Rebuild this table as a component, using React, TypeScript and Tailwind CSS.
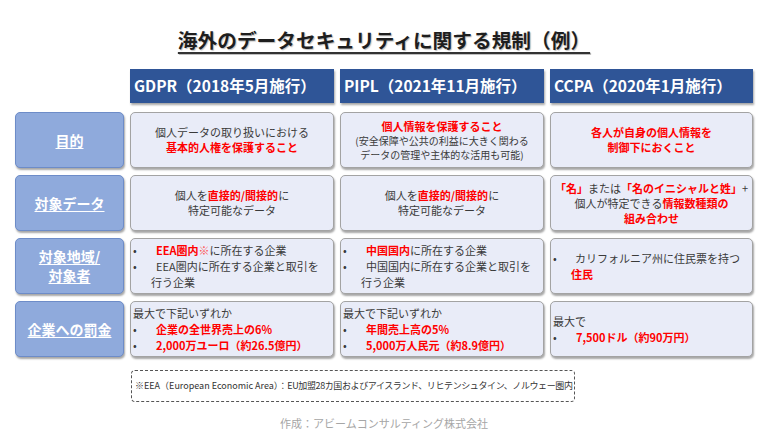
import type { ReactNode } from 'react'

const FONT = { fontFamily: '"Noto Sans CJK JP", "Noto Sans", sans-serif' }

function Red({ children }: { children: ReactNode }) {
  return <span className="font-bold text-[#ff0000]">{children}</span>
}

function Label({ children }: { children: ReactNode }) {
  return (
    <div className="flex w-[109px] shrink-0 flex-col items-center justify-center rounded-[5px] border border-[#6d8cc8] bg-[#8faadc] text-[14px] font-bold leading-[19px] text-white shadow-[1px_2px_2px_rgba(0,0,0,0.35)]">
      {children}
    </div>
  )
}

function Cell({ children, center = true, w = 'w-[204px]' }: { children: ReactNode; center?: boolean; w?: string }) {
  return (
    <div
      className={`flex ${w} shrink-0 flex-col justify-center rounded-[5px] border border-[#a3a3a3] bg-[#e9ecf8] text-[11px] text-[#3a3a3a] shadow-[1px_2px_2px_rgba(0,0,0,0.35)] ${
        center ? 'items-center text-center leading-[15px]' : 'items-stretch pl-[2px] leading-[16px]'
      }`}
    >
      {children}
    </div>
  )
}

function Bullet({ children, indent = 'pl-[4px]' }: { children: ReactNode; indent?: string }) {
  return (
    <div className="flex whitespace-nowrap">
      <span className="w-[18px] shrink-0">•</span>
      <span className={indent}>{children}</span>
    </div>
  )
}

function Header({ children, w = 'w-[204px]' }: { children: ReactNode; w?: string }) {
  return (
    <div className={`flex h-[34px] ${w} shrink-0 items-center bg-[#2f5597] pl-[4px] text-[15.5px] font-bold text-white shadow-[1px_2px_2px_rgba(0,0,0,0.35)]`}>
      {children}
    </div>
  )
}

export default function App() {
  return (
    <div className="flex h-[432px] w-[768px] flex-col overflow-hidden bg-white" style={FONT}>
      <div className="flex h-[69px] shrink-0 justify-center pt-[28px]">
        <h1 className="text-[19.7px] font-bold leading-[24px] text-[#1e1e1e] underline decoration-[#333] decoration-2 underline-offset-[4px] [text-shadow:1px_1px_1px_rgba(0,0,0,0.25)]">
          海外のデータセキュリティに関する規制（例）
        </h1>
      </div>

      <div className="flex flex-col pl-[15px]">
        <div className="flex gap-[6px] pl-[115px]">
          <Header>GDPR（2018年5月施行）</Header>
          <Header>PIPL（2021年11月施行）</Header>
          <Header w="w-[203px]">CCPA（2020年1月施行）</Header>
        </div>

        <div className="mt-[9px] flex flex-col gap-[7px]">
          <div className="flex h-[56px] gap-[6px]">
            <Label>
              <span className="underline underline-offset-2">目的</span>
            </Label>
            <Cell>
              <div>個人データの取り扱いにおける</div>
              <div>
                <Red>基本的人権を保護すること</Red>
              </div>
            </Cell>
            <Cell>
              <div className="leading-[16px]">
                <Red>個人情報を保護すること</Red>
              </div>
              <div className="text-[10px] leading-[14px]">(安全保障や公共の利益に大きく関わる</div>
              <div className="text-[10px] leading-[14px]">データの管理や主体的な活用も可能)</div>
            </Cell>
            <Cell w="w-[203px]">
              <div>
                <Red>各人が自身の個人情報を</Red>
              </div>
              <div>
                <Red>制御下におくこと</Red>
              </div>
            </Cell>
          </div>

          <div className="flex h-[56px] gap-[6px]">
            <Label>
              <span className="underline underline-offset-2">対象データ</span>
            </Label>
            <Cell>
              <div>
                個人を<Red>直接的/間接的</Red>に
              </div>
              <div>特定可能なデータ</div>
            </Cell>
            <Cell>
              <div>
                個人を<Red>直接的/間接的</Red>に
              </div>
              <div>特定可能なデータ</div>
            </Cell>
            <Cell w="w-[203px]">
              <div className="whitespace-nowrap">
                <Red>「名」</Red>または<Red>「名のイニシャルと姓」</Red>+
              </div>
              <div>
                個人が特定できる<Red>情報数種類の</Red>
              </div>
              <div>
                <Red>組み合わせ</Red>
              </div>
            </Cell>
          </div>

          <div className="flex h-[56px] gap-[6px]">
            <Label>
              <span className="underline underline-offset-2">対象地域/</span>
              <span className="underline underline-offset-2">対象者</span>
            </Label>
            <Cell center={false}>
              <Bullet indent="pl-[5px]">
                <Red>EEA圏内</Red>
                <span className="text-[#ff5050]">※</span>に所在する企業
              </Bullet>
              <Bullet indent="pl-[5px]">EEA圏内に所在する企業と取引を</Bullet>
              <div className="pl-[18px]">行う企業</div>
            </Cell>
            <Cell center={false}>
              <Bullet indent="pl-[5px]">
                <Red>中国国内</Red>に所在する企業
              </Bullet>
              <Bullet indent="pl-[5px]">中国国内に所在する企業と取引を</Bullet>
              <div className="pl-[18px]">行う企業</div>
            </Cell>
            <Cell center={false} w="w-[203px]">
              <Bullet>カリフォルニア州に住民票を持つ</Bullet>
              <div className="pl-[18px]">
                <Red>住民</Red>
              </div>
            </Cell>
          </div>

          <div className="flex h-[56px] gap-[6px]">
            <Label>
              <span className="underline underline-offset-2">企業への罰金</span>
            </Label>
            <Cell center={false}>
              <div>最大で下記いずれか</div>
              <Bullet indent="pl-[5px]">
                <Red>企業の全世界売上の6%</Red>
              </Bullet>
              <Bullet indent="pl-[5px]">
                <Red>2,000万ユーロ（約26.5億円）</Red>
              </Bullet>
            </Cell>
            <Cell center={false}>
              <div>最大で下記いずれか</div>
              <Bullet indent="pl-[5px]">
                <Red>年間売上高の5%</Red>
              </Bullet>
              <Bullet indent="pl-[5px]">
                <Red>5,000万人民元（約8.9億円）</Red>
              </Bullet>
            </Cell>
            <Cell center={false} w="w-[203px]">
              <div>最大で</div>
              <Bullet indent="pl-[5px]">
                <Red>7,500ドル（約90万円）</Red>
              </Bullet>
            </Cell>
          </div>
        </div>
      </div>

      <div className="ml-[131px] mt-[13px] flex h-[32px] w-[444px] items-center whitespace-nowrap rounded-[4px] border border-dashed border-[#555] pl-[3px] text-[9px] text-[#333]">
        <span>※EEA（European Economic Area）：</span>
        <span className="tracking-[-0.4px]">EU加盟28カ国およびアイスランド、リヒテンシュタイン、ノルウェー圏内</span>
      </div>

      <div className="mt-[13px] text-center text-[11px] leading-[16px] text-[#a6a6a6]">作成：アビームコンサルティング株式会社</div>
    </div>
  )
}
